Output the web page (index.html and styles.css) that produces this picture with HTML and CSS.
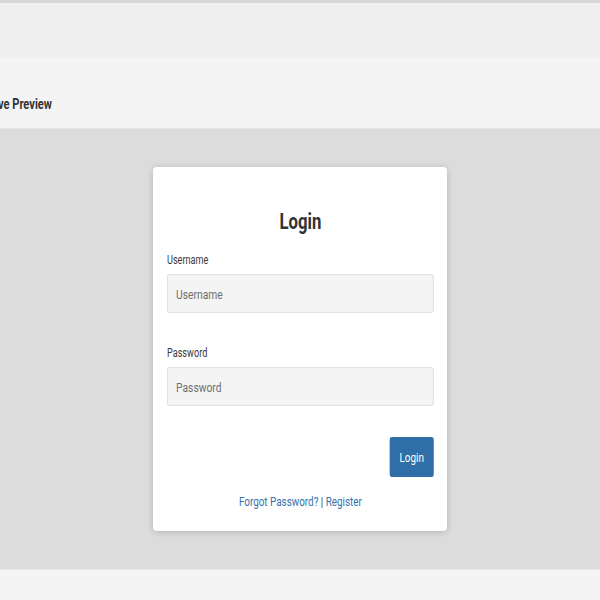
FILE: index.html
```html
<!DOCTYPE html>
<html>
<head>
<meta charset="utf-8">
<link rel="stylesheet" href="styles.css">
</head>
<body>
<div class="topbar"></div>
<div class="header"><h2 class="header-title">Live Preview</h2></div>
<div class="preview">
  <div class="card">
    <div class="card-body">
      <h1 class="card-title">Login</h1>
      <label class="field-label">Username</label>
      <input class="field-input" type="text" placeholder="Username">
      <label class="field-label field-label-second">Password</label>
      <input class="field-input" type="password" placeholder="Password">
      <div class="actions"><button class="btn">Login</button></div>
      <div class="links"><a href="#">Forgot Password?</a> | <a href="#">Register</a></div>
    </div>
  </div>
</div>
<div class="footer"></div>
</body>
</html>
```
FILE: styles.css
```css
* { box-sizing: border-box; }
html, body { margin: 0; padding: 0; }
body {
  font-family: Roboto, "Liberation Sans", sans-serif;
  background: #f4f4f4;
  color: #333;
  overflow: hidden;
}
.topbar {
  height: 57px;
  background: #efefef;
  border-top: 3px solid #d8d8d8;
}
.header {
  height: 72px;
  background: #f4f4f4;
  border-top: 1px solid #f2f2f2;
  border-bottom: 1px solid #e6e6e6;
  display: flex;
  align-items: flex-end;
}
.header-title {
  display: inline-block;
  margin: 0 0 15px -11px;
  font-size: 15px;
  line-height: 18px;
  font-weight: bold;
  color: #333;
  transform: scaleX(0.74);
  transform-origin: left center;
  white-space: nowrap;
}
.preview {
  height: 440px;
  background: #dcdcdc;
  padding-top: 38px;
  display: flex;
  justify-content: center;
  align-items: flex-start;
}
.card {
  width: 294px;
  height: 364px;
  background: #fff;
  border-radius: 4px;
  box-shadow: 0 1px 6px rgba(0,0,0,0.18);
  padding: 42px 13px 21px 14px;
}
.card-body {
  width: 351px;
  display: flex;
  flex-direction: column;
  transform: scaleX(0.76);
  transform-origin: left top;
}
.card-title {
  margin: 0;
  text-align: center;
  font-size: 22px;
  line-height: 26px;
  font-weight: bold;
  color: #333;
}
.field-label {
  margin-top: 17px;
  font-size: 12px;
  line-height: 16px;
  color: #3a3a3a;
}
.field-label-second { margin-top: 32px; }
.field-input {
  margin-top: 6px;
  height: 39px;
  width: 100%;
  background: #f4f4f4;
  border: 1px solid #dcdcdc;
  border-radius: 3px;
  padding: 0 11px;
  font-family: inherit;
  font-size: 13.5px;
  color: #333;
  outline: none;
}
.field-input::placeholder { color: #6f6f6f; }
.actions {
  margin-top: 31px;
  display: flex;
  justify-content: flex-end;
}
.btn {
  width: 58px;
  height: 40px;
  background: #2f6ea6;
  color: #fff;
  border: none;
  border-radius: 3px;
  font-family: inherit;
  font-size: 13px;
  padding: 0;
}
.links {
  margin-top: 17px;
  text-align: center;
  font-size: 13px;
  line-height: 16px;
  color: #333;
}
.links a { color: #3672ac; text-decoration: none; }
.footer {
  height: 31px;
  background: #f4f4f4;
  border-top: 1px solid #e8e8e8;
}
```
